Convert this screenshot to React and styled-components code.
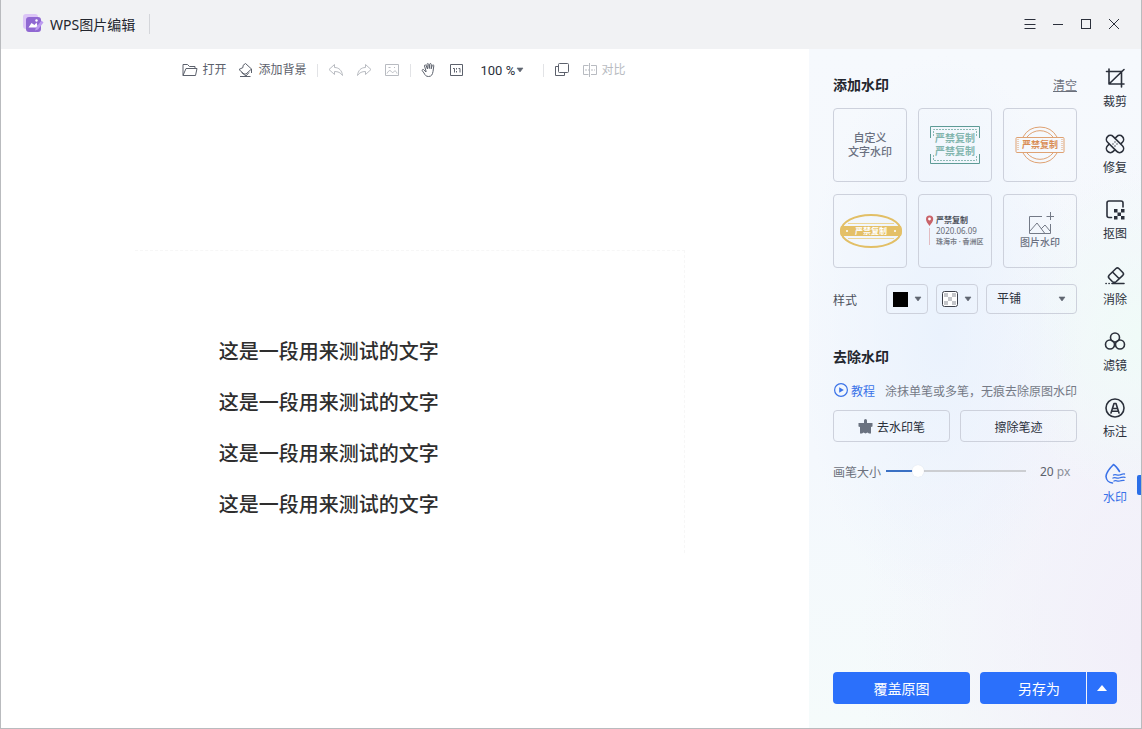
import React, { useState } from "react";
import styled, { createGlobalStyle, css } from "styled-components";

const GlobalStyle = createGlobalStyle`
  * {
    box-sizing: border-box;
  }
  body {
    margin: 0;
    font-family: "Liberation Sans", "Noto Sans CJK SC", sans-serif;
    font-size: 12px;
    color: #2b303b;
  }
  button, select, input {
    font-family: inherit;
    font-size: inherit;
    color: inherit;
    margin: 0;
  }
  button {
    padding: 0;
    border: none;
    background: none;
    cursor: pointer;
  }
`;

const tools = [
  { name: "裁剪", icon: <CropIcon /> },
  { name: "修复", icon: <RepairIcon /> },
  { name: "抠图", icon: <CutoutIcon /> },
  { name: "消除", icon: <EraserIcon /> },
  { name: "滤镜", icon: <FilterIcon /> },
  { name: "标注", icon: <MarkIcon /> },
  { name: "水印", icon: <WatermarkIcon /> },
];

const lines = [1, 2, 3, 4];

function App() {
  const [tool, setTool] = useState("水印");
  const [size, setSize] = useState(20);

  return (
    <Window>
      <GlobalStyle />
      <Header>
        <Logo />
        <AppName>WPS图片编辑</AppName>
        <HeaderLine />
        <WindowButtons>
          <WindowButton aria-label="菜单">
            <svg width="12" height="12" viewBox="0 0 12 12" stroke="#2b303b">
              <path d="M0.5 1.5h11M0.5 6.5h11M0.5 10.5h11" />
            </svg>
          </WindowButton>
          <WindowButton aria-label="最小化">
            <svg width="12" height="12" viewBox="0 0 12 12" stroke="#2b303b">
              <path d="M1 6.5h10" />
            </svg>
          </WindowButton>
          <WindowButton aria-label="最大化">
            <svg width="12" height="12" viewBox="0 0 12 12" stroke="#2b303b" fill="none">
              <rect x="1.5" y="1.5" width="9" height="9" />
            </svg>
          </WindowButton>
          <WindowButton aria-label="关闭">
            <svg width="12" height="12" viewBox="0 0 12 12" stroke="#2b303b">
              <path d="M1 1l10 10M11 1L1 11" />
            </svg>
          </WindowButton>
        </WindowButtons>
      </Header>

      <Body>
        <Workspace>
          <Toolbar>
            <ToolGroup>
              <ToolButton>
                <OpenIcon />
                打开
              </ToolButton>
              <ToolButton>
                <BackgroundIcon />
                添加背景
              </ToolButton>
            </ToolGroup>
            <ToolLine />
            <ToolGroup>
              <ToolButton $muted aria-label="撤销">
                <UndoIcon />
              </ToolButton>
              <ToolButton $muted aria-label="重做">
                <UndoIcon flip />
              </ToolButton>
              <ToolButton $muted aria-label="原图">
                <PictureIcon />
              </ToolButton>
            </ToolGroup>
            <ToolLine />
            <ToolGroup>
              <ToolButton aria-label="移动">
                <HandIcon />
              </ToolButton>
              <ToolButton aria-label="实际大小">
                <RatioIcon />
              </ToolButton>
              <Zoom>
                <ZoomSelect aria-label="缩放" defaultValue="100">
                  <option value="50">50 %</option>
                  <option value="100">100 %</option>
                  <option value="200">200 %</option>
                </ZoomSelect>
                <Caret />
              </Zoom>
            </ToolGroup>
            <ToolLine />
            <ToolGroup>
              <ToolButton aria-label="复制">
                <CopyIcon />
              </ToolButton>
              <ToolButton $muted>
                <CompareIcon />
                对比
              </ToolButton>
            </ToolGroup>
          </Toolbar>
          <Stage>
            <Artboard>
              {lines.map((el) => (
                <Line key={el}>这是一段用来测试的文字</Line>
              ))}
            </Artboard>
          </Stage>
        </Workspace>

        <Side>
          <SideTop>
            <Panel>
              <TitleRow>
                <Title>添加水印</Title>
                <ClearButton>清空</ClearButton>
              </TitleRow>
              <Cards>
                <Card>
                  自定义
                  <br />
                  文字水印
                </Card>
                <Card aria-label="方形水印">
                  <SquareStamp />
                </Card>
                <Card aria-label="圆形水印">
                  <RoundStamp />
                </Card>
                <Card aria-label="椭圆水印">
                  <OvalStamp />
                </Card>
                <Card aria-label="地点水印">
                  <PlaceStamp />
                </Card>
                <Card $small>
                  <AddPictureIcon />
                  图片水印
                </Card>
              </Cards>
              <StyleRow>
                <StyleLabel htmlFor="layout">样式</StyleLabel>
                <SwatchButton aria-label="颜色">
                  <svg width="16" height="16">
                    <rect x="1" y="1" width="15" height="15" fill="#000" />
                  </svg>
                  <Caret />
                </SwatchButton>
                <SwatchButton aria-label="透明度">
                  <CheckerIcon />
                  <Caret />
                </SwatchButton>
                <LayoutBox>
                  <LayoutSelect id="layout">
                    <option>平铺</option>
                    <option>居中</option>
                  </LayoutSelect>
                  <Caret />
                </LayoutBox>
              </StyleRow>

              <TitleRow $second>
                <Title>去除水印</Title>
              </TitleRow>
              <HelpRow>
                <HelpLink href="#help">
                  <PlayIcon />
                  教程
                </HelpLink>
                <span>涂抹单笔或多笔，无痕去除原图水印</span>
              </HelpRow>
              <PenRow>
                <PenButton>
                  <PenIcon />
                  去水印笔
                </PenButton>
                <PenButton>擦除笔迹</PenButton>
              </PenRow>
              <SizeRow>
                <label htmlFor="size">画笔大小</label>
                <Slider
                  id="size"
                  type="range"
                  value={size}
                  onChange={(e) => setSize(Number(e.target.value))}
                  style={{ "--fill": `${size}%` }}
                />
                <SizeValue>
                  <b>{size}</b> px
                </SizeValue>
              </SizeRow>
            </Panel>

            <Rail>
              {tools.map((el) => (
                <RailButton
                  key={el.name}
                  $active={el.name === tool}
                  onClick={() => setTool(el.name)}
                >
                  {el.icon}
                  {el.name}
                </RailButton>
              ))}
            </Rail>
          </SideTop>

          <Footer>
            <CoverButton>覆盖原图</CoverButton>
            <Split>
              <SaveButton>另存为</SaveButton>
              <MoreButton aria-label="更多">
                <svg width="10" height="6">
                  <path d="M5 0l5 6H0z" fill="#fff" />
                </svg>
              </MoreButton>
            </Split>
          </Footer>
        </Side>
      </Body>
    </Window>
  );
}

export default App;

/* icons */

function Caret() {
  return (
    <svg width="8" height="6" viewBox="0 0 8 6">
      <path d="M1 1h6L4 5z" fill="#5f6570" stroke="#5f6570" strokeWidth="0.6" />
    </svg>
  );
}

function Logo() {
  return (
    <svg width="21" height="20" viewBox="0 0 21 20">
      <rect x="0" y="0" width="15" height="15" rx="3" fill="#dcc5f7" />
      <rect x="3" y="3" width="15" height="15" rx="3" fill="#9068d2" />
      <path d="M5.500 13.500l3-4.500 3 2 2-2.500 1.500 5z" fill="#fff" />
      <circle cx="13.500" cy="6.500" r="1.200" fill="#fff" />
      <path d="M18.500 6.500l2 2-5.500 7-3 1 1-3z" fill="#bd9bf0" />
    </svg>
  );
}

function Icon16({ children }) {
  return (
    <svg
      width="16"
      height="16"
      viewBox="0 0 16 16"
      fill="none"
      stroke="currentColor"
      strokeLinejoin="round"
    >
      {children}
    </svg>
  );
}

function OpenIcon() {
  return (
    <Icon16>
      <path d="M1 13.500V2.500h4.500l2 2H13v2M1 13.500L4 6.500h11l-1.500 7z" />
    </Icon16>
  );
}

function BackgroundIcon() {
  return (
    <Icon16>
      <path d="M7.500 1.500l6 5.500-5.500 5h-2L1 7.500l4-2V3.500zM13.500 7v4M2 14.500h10.500" />
      <path d="M3.500 10.500l4.500 3.500 3-3.500" />
    </Icon16>
  );
}

function UndoIcon({ flip }) {
  return (
    <Icon16>
      <path
        transform={flip ? "translate(16 0) scale(-1 1)" : undefined}
        d="M1 7.500L6.500 2.500v3c4.500 0 7.500 3 8 8-2-3-4.500-4-8-4v3z"
      />
    </Icon16>
  );
}

function PictureIcon() {
  return (
    <Icon16>
      <rect x="1.500" y="2.500" width="13" height="11" />
      <path d="M3 11.500c1-2 2-3 3-3s1.500 2 2.500 2 1.500-1.500 2.500-1.500 1.500 1 2 2.500M4.500 5.500h2M10 5.500h1" />
    </Icon16>
  );
}

function HandIcon() {
  return (
    <Icon16>
      <path d="M5 9L3.500 4c-.3-1.200 1.200-1.600 1.600-.5L6.500 7 6 2.500c0-1.300 1.500-1.300 1.700 0L8.300 6.500l.4-4.200c.1-1.100 1.600-1 1.600.2l-.1 4.300 1-3.300c.4-1.100 1.800-.7 1.600.4L12 9.500c-.5 3-1.500 5-4.500 5-2.500 0-3.600-1.500-4.500-3.500L1.200 8.600C1 7.300 2.300 7 3 7.900L5 10z" />
    </Icon16>
  );
}

function RatioIcon() {
  return (
    <Icon16>
      <rect x="1.500" y="2.500" width="12" height="11" />
      <path d="M4 6.500h1.500v4M9.500 6.500H11v4M7.500 6v1.500M7.500 9v1.500" />
    </Icon16>
  );
}

function CopyIcon() {
  return (
    <Icon16>
      <rect x="4.500" y="1.500" width="10" height="9" rx="1" />
      <path d="M4 4.500H1.500v9h9v-3" />
    </Icon16>
  );
}

function CompareIcon() {
  return (
    <Icon16>
      <path d="M6.500 3.500H1.500v9h5M7.500 1v14M9 3.500h5.500v9H9" />
      <path d="M3 8h10" strokeDasharray="2 1" />
    </Icon16>
  );
}

function PlayIcon() {
  return (
    <svg width="14" height="14" viewBox="0 0 14 14">
      <circle cx="7" cy="7" r="6.400" fill="none" stroke="#3a72e8" strokeWidth="1.200" />
      <path d="M5.200 4.200L9.800 7l-4.600 2.800z" fill="#3a72e8" />
    </svg>
  );
}

function PenIcon() {
  return (
    <svg width="15" height="15" viewBox="0 0 15 15" fill="#6a7280">
      <path d="M6 1.500a1.500 1.500 0 013 0V4h5.500v3.500L13 8v6.500h-2l-1.500-1-2 1-2-1-1.500 1H2V8L.5 7.500V4H6z" />
    </svg>
  );
}

function CheckerIcon() {
  return (
    <svg width="16" height="16" viewBox="0 0 16 16">
      <rect x="0.500" y="0.500" width="15" height="15" rx="2" fill="#fff" stroke="#3c404a" />
      <path
        d="M2 2h4v4H2zM10 2h4v4h-4zM6 6h4v4H6zM2 10h4v4H2zM10 10h4v4h-4z"
        fill="#c4c6ca"
      />
    </svg>
  );
}

function Icon22({ children }) {
  return (
    <svg
      width="22"
      height="22"
      viewBox="0 0 22 22"
      fill="none"
      stroke="currentColor"
      strokeWidth="1.600"
      strokeLinejoin="round"
      strokeLinecap="round"
    >
      {children}
    </svg>
  );
}

function CropIcon() {
  return (
    <Icon22>
      <path d="M5 2v15h15M2.500 4.500H17.500V20M5.500 16.500L20 2.500" />
    </Icon22>
  );
}

function RepairIcon() {
  return (
    <Icon22>
      <rect x="0.500" y="7" width="21" height="8" rx="4" transform="rotate(45 11 11)" />
      <path
        d="M6.500 7H4.500a4 4 0 000 8h2M15.500 7h2a4 4 0 010 8h-2"
        transform="rotate(-45 11 11)"
      />
      <path d="M11 9v.1M9 11v.1M13 11v.1M11 13v.1" strokeWidth="1.300" />
    </Icon22>
  );
}

function CutoutIcon() {
  return (
    <Icon22>
      <path d="M7.500 18.500H5a2 2 0 01-2-2V4a2 2 0 012-2h12a2 2 0 012 2v4" />
      <path
        d="M10 10h3.500v3.500H10zM17 10h3.500v3.500H17zM13.500 13.500H17V17h-3.500zM10 17h3.500v3.500H10zM17 17h3.500v3.500H17z"
        fill="currentColor"
        stroke="none"
      />
    </Icon22>
  );
}

function EraserIcon() {
  return (
    <Icon22>
      <path d="M12 3.500a2 2 0 012.800 0l4 4a2 2 0 010 2.800l-6.500 6.200a3 3 0 01-4 0l-3-3a2.500 2.500 0 010-3.500zM8.500 7l6.500 6.500M8 18.500h12M2 18.500h.2M5 18.500h.2" />
    </Icon22>
  );
}

function FilterIcon() {
  return (
    <Icon22>
      <circle cx="11" cy="6.500" r="4.500" />
      <circle cx="6" cy="13.500" r="4.500" />
      <circle cx="16" cy="13.500" r="4.500" />
    </Icon22>
  );
}

function MarkIcon() {
  return (
    <Icon22>
      <circle cx="11" cy="11" r="9" />
      <path d="M7 16l3-9.500h2l3 9.500M8.500 11.500h5M8 14.200h6" />
    </Icon22>
  );
}

function WatermarkIcon() {
  return (
    <Icon22>
      <path d="M15.500 8.500C14 6 12 3 9.500 1.500 6.500 4.500 2 9.500 2 13.500A7 7 0 008.500 20" />
      <path
        d="M9.500 12c2-1.500 3.500.8 6 0s3-1.200 5-1M9 15c2-1.500 3.500.8 6 0s4-1 6-.7M10 18c2-1.500 3 .8 5.500 0s3-.8 4.500-.6"
        strokeWidth="1.300"
      />
    </Icon22>
  );
}

function AddPictureIcon() {
  return (
    <svg width="28" height="24" viewBox="0 0 28 24" fill="none" stroke="#737986">
      <path d="M16 4.500H3.500v17h21V12M24.500 0v8M20.500 4.500h8" />
      <path d="M4 19l7-8 7.500 10M15 17l4-4 5 6" />
    </svg>
  );
}

/* watermark samples */

function SquareStamp() {
  return (
    <Stamp viewBox="0 0 50 38" width="50" height="38">
      <path d="M0.500 12V0.500h49V12M0.500 28v9.500h49V28" fill="none" stroke="#5d9b96" />
      <path
        d="M3.500 10V3.500h43V10M3.500 29v5.500h43V29"
        fill="none"
        stroke="#8dbab5"
        strokeDasharray="2 1"
      />
      <StampText x="25" y="16" $size={10} fill="#82b5ae">
        严禁复制
      </StampText>
      <StampText x="25" y="29" $size={10} fill="#82b5ae">
        严禁复制
      </StampText>
    </Stamp>
  );
}

function RoundStamp() {
  return (
    <Stamp viewBox="0 0 50 42" width="50" height="42">
      <g fill="none" stroke="#dfa273">
        <path d="M8 13a19.500 19.500 0 0134 0M12 13a16.500 16.500 0 0126 0" />
        <path d="M8 29a19.500 19.500 0 0034 0M12 29a16.500 16.500 0 0026 0" />
        <rect x="1" y="13.500" width="48" height="15" rx="1" />
      </g>
      <path d="M3 15v12M47 15v12" stroke="#dfa273" strokeDasharray="1 1" />
      <StampText x="25" y="24" $size={9} fill="#d98d55">
        严禁复制
      </StampText>
    </Stamp>
  );
}

function OvalStamp() {
  return (
    <Stamp viewBox="0 0 64 36" width="64" height="36">
      <ellipse cx="33" cy="18" rx="30" ry="16" fill="none" stroke="#e2bf66" strokeWidth="2" />
      <path d="M10 10.500h46M10 25.500h46" stroke="#ecd698" />
      <path d="M3 13h60a14 14 0 010 10H3a14 14 0 010-10z" fill="#e4c067" />
      <circle cx="9" cy="18" r="1" fill="#fff" />
      <circle cx="57" cy="18" r="1" fill="#fff" />
      <StampText x="33" y="21" $size={8} fill="#fff">
        严禁复制
      </StampText>
    </Stamp>
  );
}

function PlaceStamp() {
  return (
    <Stamp viewBox="0 0 62 34" width="62" height="34">
      <path
        d="M5.500 12C3.500 9 2 7.500 2 5.200a3.600 3.600 0 017.200 0C9.200 7.500 7.500 9 5.500 12z"
        fill="#c9636a"
      />
      <circle cx="5.500" cy="5" r="1.400" fill="#fff" />
      <path d="M5.500 14v17" stroke="#e3bcc2" />
      <StampText x="12" y="9" $size={8} $start fill="#4b4f59">
        严禁复制
      </StampText>
      <StampText x="12" y="20" $size={8} $start $light fill="#666b76">
        2020.06.09
      </StampText>
      <StampText x="12" y="30" $size={7} $start fill="#7b808a">
        珠海市 · 香洲区
      </StampText>
    </Stamp>
  );
}

const Stamp = styled.svg`
  display: block;
  flex-shrink: 0;
`;

const StampText = styled.text`
  font-family: "Noto Sans", "Noto Sans CJK SC", sans-serif;
  font-size: ${({ $size }) => $size}px;
  font-weight: ${({ $light }) => ($light ? 400 : 700)};
  text-anchor: ${({ $start }) => ($start ? "start" : "middle")};
`;

/* layout */

const Window = styled.div`
  min-height: 100vh;
  display: flex;
  flex-direction: column;
  border: 1px solid #b9bbbe;
  border-top: none;
  background: #fff;
`;

const Header = styled.header`
  height: 49px;
  padding: 0 13px 1px 22px;
  display: flex;
  align-items: center;
  background: #f1f2f4;
`;

const AppName = styled.span`
  margin-left: 6px;
  font-family: "Noto Sans", "Noto Sans CJK SC", sans-serif;
  font-size: 14px;
  color: #23262e;
`;

const HeaderLine = styled.i`
  width: 1px;
  height: 20px;
  margin-left: 14px;
  background: #d4d6da;
`;

const WindowButtons = styled.div`
  margin-left: auto;
  display: flex;
`;

const WindowButton = styled.button`
  width: 28px;
  height: 28px;
  display: grid;
  place-items: center;
`;

const Body = styled.div`
  flex: 1;
  display: flex;
`;

const Workspace = styled.main`
  flex: 1;
  min-width: 0;
  display: flex;
  flex-direction: column;
`;

const Toolbar = styled.div`
  height: 42px;
  padding-right: 2px;
  display: flex;
  align-items: center;
  justify-content: center;
`;

const ToolGroup = styled.div`
  display: flex;
  align-items: center;
  gap: 12px;
`;

const ToolLine = styled.i`
  width: 1px;
  height: 13px;
  margin: 0 10px;
  background: #e2e3e6;
`;

const ToolButton = styled.button`
  display: flex;
  align-items: center;
  gap: 4px;
  line-height: 16px;
  white-space: nowrap;
  color: ${({ $muted }) => ($muted ? "#b8bbc1" : "#5c616c")};
`;

const Zoom = styled.div`
  width: 56px;
  padding-left: 4px;
  display: flex;
  align-items: center;
`;

const ZoomSelect = styled.select`
  appearance: none;
  padding: 0;
  border: none;
  background: none;
  font-family: Roboto, sans-serif;
  font-size: 13px;
`;

const Stage = styled.div`
  flex: 1;
  padding: 0 0 16px 10px;
  display: flex;
  align-items: center;
  justify-content: center;
`;

const Artboard = styled.div`
  width: 69%;
  padding: 76px 20px 22px 84px;
  border-top: 1px dashed #f7f7f7;
  border-right: 1px dashed #f7f7f7;
`;

const Line = styled.p`
  margin: 0;
  font-size: 20px;
  font-weight: 500;
  line-height: 51px;
  color: #2e2e2e;
`;

const Side = styled.aside`
  width: 332px;
  display: flex;
  flex-direction: column;
  background:
    radial-gradient(ellipse at 40% 42%, #eaf2fd 0%, rgba(234, 242, 253, 0) 50%),
    radial-gradient(ellipse at 100% 42%, #f0fbf8 0%, rgba(240, 251, 248, 0) 30%),
    radial-gradient(ellipse at 100% 88%, #f2eff9 0%, rgba(242, 239, 249, 0) 60%),
    linear-gradient(#f6f9fd, #f4f8fd 60%, #f5fbfb);
`;

const SideTop = styled.div`
  display: flex;
`;

const Panel = styled.section`
  flex: 1;
  min-width: 0;
  padding: 24px 12px 0 24px;
`;

const TitleRow = styled.div`
  height: 22px;
  margin-bottom: 13px;
  display: flex;
  align-items: center;
  justify-content: space-between;
  ${({ $second }) =>
    $second &&
    css`
      margin-top: 31px;
    `}
`;

const Title = styled.h2`
  margin: 0;
  font-size: 14px;
  font-weight: 700;
  color: #23262e;
`;

const ClearButton = styled.button`
  color: #6b707b;
  text-decoration: underline;
`;

const Cards = styled.div`
  display: grid;
  grid-template-columns: repeat(3, 1fr);
  gap: 12px 11px;
`;

const Card = styled.button`
  aspect-ratio: 1;
  min-width: 0;
  display: flex;
  flex-direction: column;
  align-items: center;
  justify-content: center;
  border: 1px solid #cdd1dc;
  border-radius: 4px;
  font-size: ${({ $small }) => ($small ? 10 : 11)}px;
  font-weight: 500;
  line-height: 14px;
  color: #6a7080;
`;

const StyleRow = styled.div`
  height: 30px;
  margin-top: 16px;
  display: flex;
  align-items: center;
  gap: 8px;
`;

const StyleLabel = styled.label`
  width: 45px;
  color: #4c515c;
`;

const field = css`
  height: 30px;
  border: 1px solid #cdd1dc;
  border-radius: 4px;
`;

const SwatchButton = styled.button`
  ${field}
  width: 42px;
  display: flex;
  align-items: center;
  justify-content: center;
  gap: 6px;
`;

const LayoutBox = styled.div`
  ${field}
  flex: 1;
  padding: 0 10px;
  display: flex;
  align-items: center;
`;

const LayoutSelect = styled.select`
  appearance: none;
  flex: 1;
  min-width: 0;
  padding: 0;
  border: none;
  background: none;
`;

const HelpRow = styled.div`
  height: 20px;
  display: flex;
  align-items: center;
  justify-content: space-between;
  white-space: nowrap;
  color: #757a86;
`;

const HelpLink = styled.a`
  display: flex;
  align-items: center;
  gap: 3px;
  padding-left: 1px;
  color: #3a72e8;
  text-decoration: none;
`;

const PenRow = styled.div`
  margin-top: 10px;
  display: flex;
  gap: 10px;
`;

const PenButton = styled.button`
  flex: 1;
  height: 32px;
  display: flex;
  align-items: center;
  justify-content: center;
  gap: 4px;
  border: 1px solid #cdd1dc;
  border-radius: 4px;
`;

const SizeRow = styled.div`
  height: 20px;
  margin-top: 19px;
  display: flex;
  align-items: center;
  gap: 5px;
  color: #6b707b;
`;

const Slider = styled.input`
  appearance: none;
  flex: 1;
  min-width: 0;
  height: 12px;
  background: linear-gradient(
      to right,
      #3a70c4 var(--fill),
      #ccced2 var(--fill)
    )
    center / 100% 2px no-repeat;

  &::-webkit-slider-thumb {
    appearance: none;
    width: 12px;
    height: 12px;
    border-radius: 50%;
    background: #fff;
    box-shadow: 0 0 1px rgba(60, 70, 90, 0.15);
  }
`;

const SizeValue = styled.span`
  width: 46px;
  padding-left: 9px;
  white-space: nowrap;
  font-family: "Noto Sans", sans-serif;
  color: #8b8f99;

  b {
    font-weight: 400;
    color: #5c616c;
  }
`;

const Rail = styled.nav`
  width: 52px;
  padding-top: 18px;
  display: flex;
  flex-direction: column;
  gap: 23px;
`;

const RailButton = styled.button`
  position: relative;
  display: flex;
  flex-direction: column;
  align-items: center;
  gap: 5px;
  line-height: 16px;
  color: ${({ $active }) => ($active ? "#3a72e8" : "#2b303b")};

  ${({ $active }) =>
    $active &&
    css`
      &::after {
        content: "";
        position: absolute;
        right: 0;
        top: 12px;
        width: 4px;
        height: 20px;
        border-radius: 2px 0 0 2px;
        background: #2b6fe8;
      }
    `}
`;

const Footer = styled.div`
  margin-top: auto;
  padding: 24px;
  display: flex;
  gap: 10px;
`;

const CoverButton = styled.button`
  flex: 1;
  height: 32px;
  padding-bottom: 1px;
  border-radius: 4px;
  background: #2b70fb;
  color: #fff;
  font-size: 14px;
`;

const Split = styled.div`
  flex: 1;
  display: flex;
  gap: 1px;
`;

const SaveButton = styled(CoverButton)`
  padding-left: 12px;
  border-radius: 4px 0 0 4px;
`;

const MoreButton = styled(CoverButton)`
  flex: none;
  width: 30px;
  display: grid;
  place-items: center;
  border-radius: 0 4px 4px 0;
`;
